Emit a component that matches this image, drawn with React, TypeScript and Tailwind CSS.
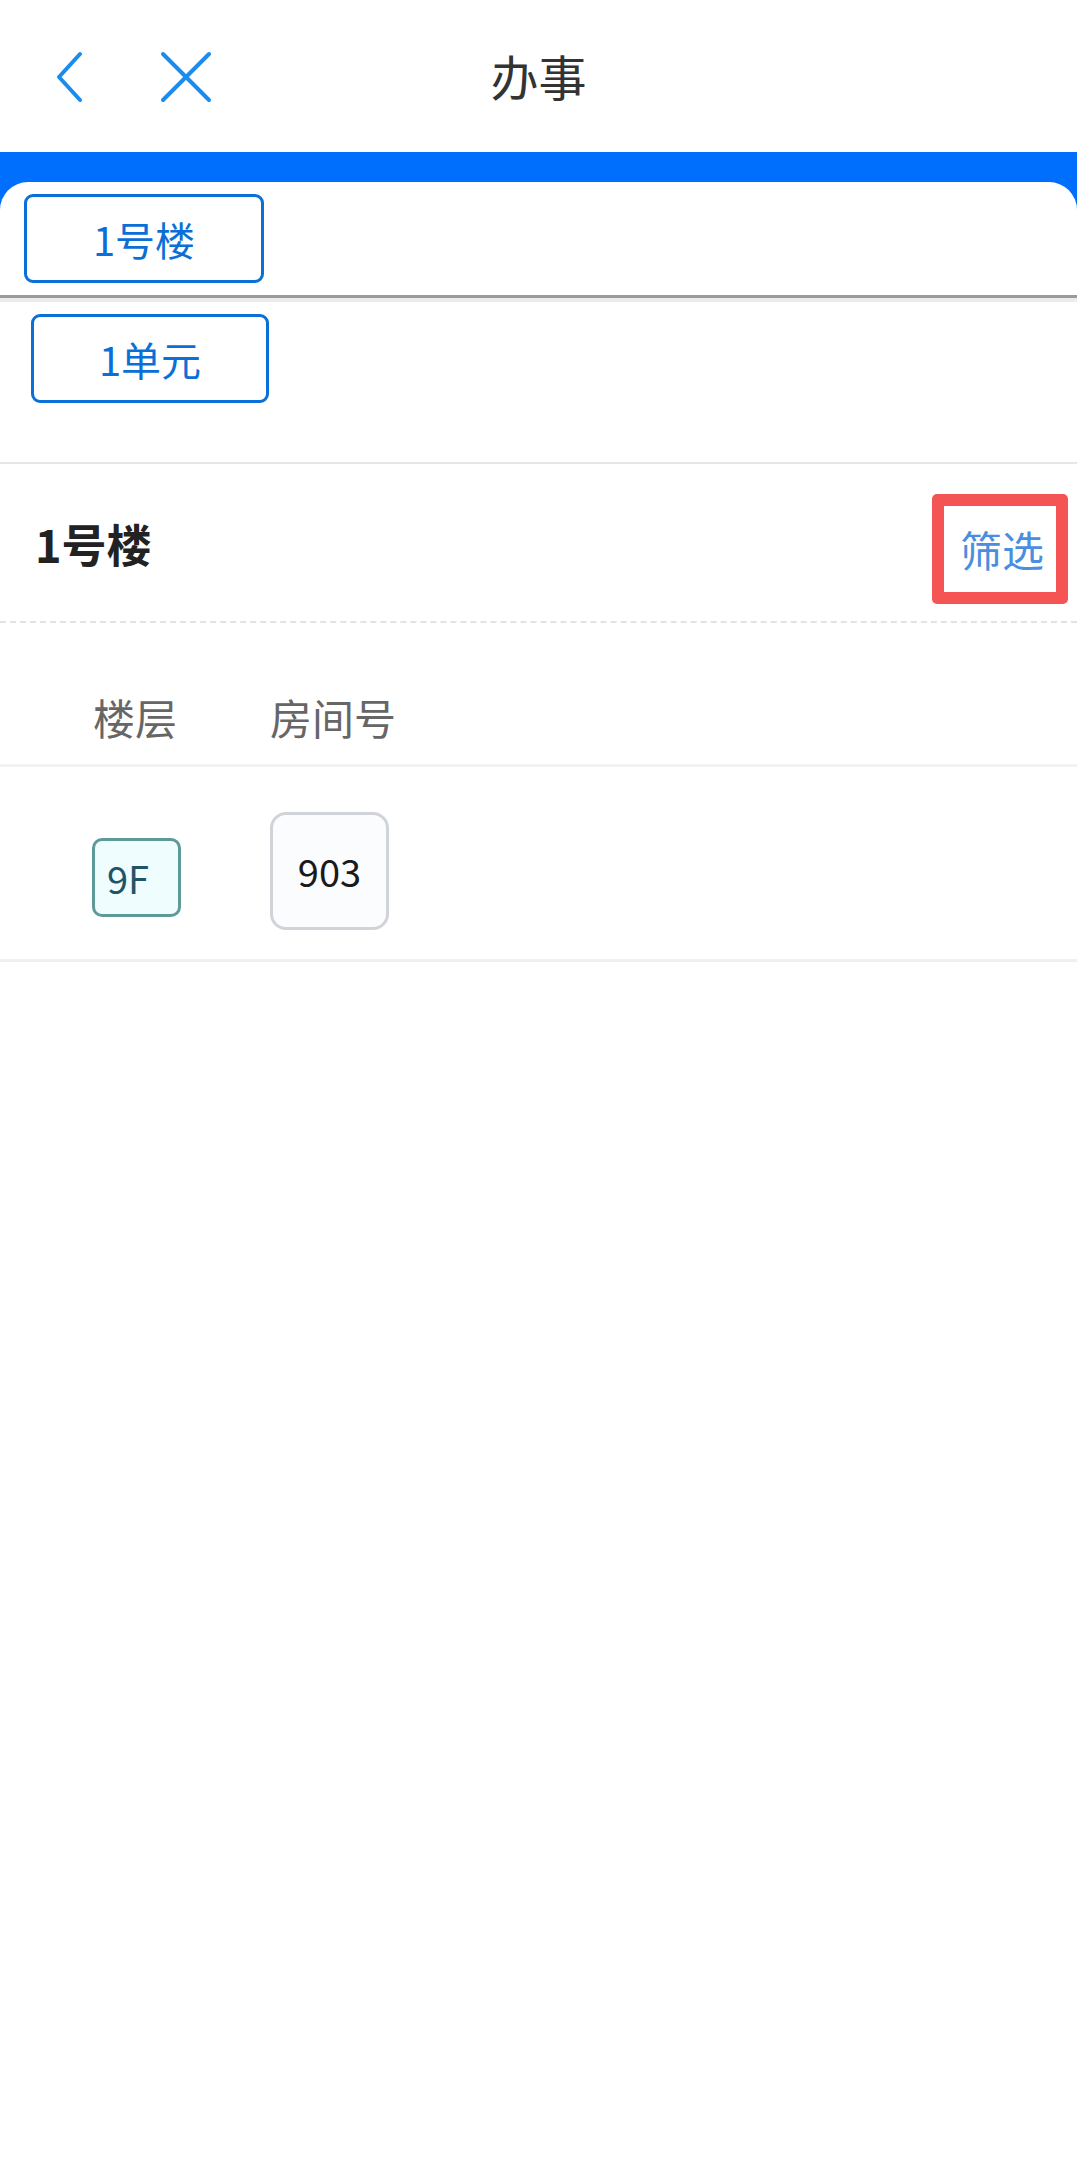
import React from "react";

function BackIcon() {
  return (
    <svg width="28" height="52" viewBox="0 0 28 52" fill="none">
      <path d="M25 3 L4 26 L25 49" stroke="#1a8cf0" strokeWidth="4" strokeLinecap="round" strokeLinejoin="round" />
    </svg>
  );
}

function CloseIcon() {
  return (
    <svg width="52" height="52" viewBox="0 0 52 52" fill="none">
      <path d="M3 3 L49 49 M49 3 L3 49" stroke="#1a8cf0" strokeWidth="4" strokeLinecap="round" />
    </svg>
  );
}

export default function App() {
  return (
    <div className="w-[1077px] min-h-[2183px] bg-white font-['Noto_Sans_CJK_SC','Noto_Sans',sans-serif]">
      {/* Header */}
      <div className="grid h-[152px] grid-cols-[1fr_auto_1fr] items-center">
        <div className="flex items-center pl-[55px] pt-[1px]">
          <BackIcon />
          <div className="ml-[77px]">
            <CloseIcon />
          </div>
        </div>
        <div className="text-[48px] leading-none text-[#333333] pb-[2px]">办事</div>
        <div />
      </div>

      {/* Blue band + tab card */}
      <div className="bg-[#006ffe] pt-[30px]">
        <div className="h-[113px] rounded-t-[28px] bg-white pl-[24px] pt-[12px]">
          <div className="flex h-[89px] w-[240px] items-center justify-center rounded-[9px] border-[3px] border-[#0a6fd6] text-[40px] leading-none text-[#0a6fd6]">
            1号楼
          </div>
        </div>
      </div>
      <div className="h-[3px] bg-[#9a9a9a]" />
      <div className="h-[4px] bg-[#ececec]" />

      {/* Unit row */}
      <div className="h-[162px] border-b-2 border-[#e6e6e6] pl-[31px] pt-[12px]">
        <div className="flex h-[89px] w-[238px] items-center justify-center rounded-[9px] border-[3px] border-[#0a6fd6] text-[40px] leading-none text-[#0a6fd6]">
          1单元
        </div>
      </div>

      {/* Section heading */}
      <div className="flex h-[159px] items-start justify-between border-b-2 border-dashed border-[#e3e3e3] pl-[35px] pr-[9px]">
        <div className="mt-[57px] text-[45px] font-bold leading-none text-[#222222]">1号楼</div>
        <div className="mt-[30px] flex h-[110px] w-[136px] items-center rounded-[5px] border-[12px] border-[#f55454] pl-[16px]">
          <span className="text-[42px] leading-none text-[#4a8ee0]">筛选</span>
        </div>
      </div>

      {/* Table header */}
      <div className="flex h-[144px] items-start border-b-[3px] border-[#f2f2f2] pl-[93px] pt-[73px]">
        <div className="w-[177px] text-[42px] leading-none text-[#666666]">楼层</div>
        <div className="text-[42px] leading-none text-[#666666]">房间号</div>
      </div>

      {/* Table row */}
      <div className="flex h-[195px] items-start border-b-[3px] border-[#f0f0f0] pl-[92px]">
        <div className="w-[178px] pt-[71px]">
          <div className="flex h-[79px] w-[89px] items-center rounded-[10px] border-[3px] border-[#5e9a98] bg-[#f0fdff] pl-[12px] pt-[1px]">
            <span className="text-[38px] leading-none text-[#1f5566]">9F</span>
          </div>
        </div>
        <div className="pt-[45px]">
          <div className="flex h-[118px] w-[119px] items-center justify-center rounded-[16px] border-[3px] border-[#d0d3d8] bg-[#fbfcfe]">
            <span className="text-[38px] leading-none text-[#1a1a1a]">903</span>
          </div>
        </div>
      </div>
    </div>
  );
}
